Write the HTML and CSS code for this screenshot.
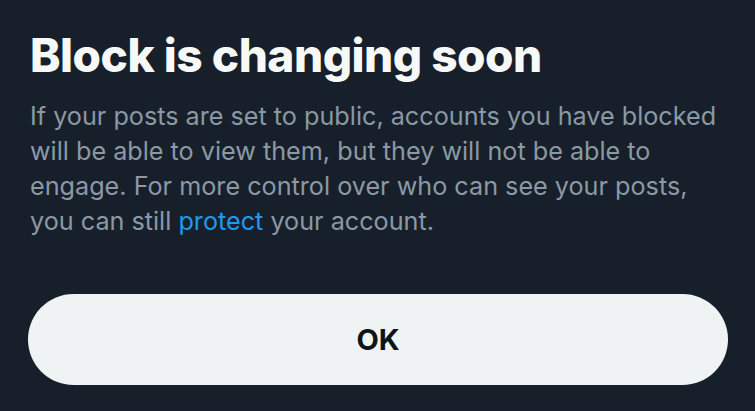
FILE: index.html
```html
<!DOCTYPE html>
<html lang="en">
<head>
<meta charset="utf-8">
<title>Block is changing soon</title>
<link rel="stylesheet" href="styles.css">
</head>
<body>
<div class="dialog">
  <h1 class="title">Block is changing soon</h1>
  <p class="body">If your posts are set to public, accounts you have blocked will be able to view them, but they will not be able to engage. For more control over who can see your posts, you can still <a class="link" href="#">protect</a> your account.</p>
  <button class="ok" type="button">OK</button>
</div>
</body>
</html>
```
FILE: styles.css
```css
html, body {
  margin: 0;
  padding: 0;
  background: #17202a;
  height: 100%;
}
.dialog {
  padding: 27px 27px 0 28px;
  display: flex;
  flex-direction: column;
  font-family: Inter, "Noto Sans", sans-serif;
}
.title {
  margin: 0;
  color: #f7f9f9;
  font-size: 46px;
  line-height: 56px;
  font-weight: 800;
  letter-spacing: -0.5px;
  padding-left: 2px;
}
.body {
  margin: 16px 0 0 0;
  padding-left: 2px;
  color: #8b98a5;
  font-size: 25.2px;
  line-height: 35px;
  font-weight: 400;
}
.link {
  color: #1d9bf0;
  text-decoration: none;
}
.ok {
  margin-top: 55px;
  height: 91px;
  border: none;
  border-radius: 46px;
  background: #eff3f4;
  color: #0f1419;
  font-family: Inter, "Noto Sans", sans-serif;
  font-size: 29px;
  font-weight: 700;
  cursor: pointer;
}
```
